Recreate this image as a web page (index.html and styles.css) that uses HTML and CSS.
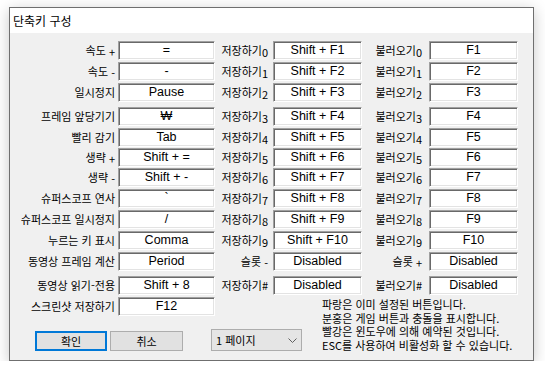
FILE: index.html
```html
<!DOCTYPE html>
<html lang="ko">
<head>
<meta charset="utf-8">
<title>단축키 구성</title>
<link rel="stylesheet" href="styles.css">
</head>
<body>
<div class="win">
  <div class="titlebar">단축키 구성</div>
  <div class="content">
    <div class="grid">
      <div class="lbl l1">속도 <span class="sub">+</span></div><div class="box">=</div>
      <div class="lbl l2">저장하기<span class="sub">0</span></div><div class="box">Shift + F1</div>
      <div class="lbl l3">불러오기<span class="sub">0</span></div><div class="box">F1</div>

      <div class="lbl l1">속도 <span class="sub">-</span></div><div class="box">-</div>
      <div class="lbl l2">저장하기<span class="sub">1</span></div><div class="box">Shift + F2</div>
      <div class="lbl l3">불러오기<span class="sub">1</span></div><div class="box">F2</div>

      <div class="lbl l1">일시정지</div><div class="box">Pause</div>
      <div class="lbl l2">저장하기<span class="sub">2</span></div><div class="box">Shift + F3</div>
      <div class="lbl l3">불러오기<span class="sub">2</span></div><div class="box">F3</div>

      <div class="lbl l1">프레임 앞당기기</div><div class="box">₩</div>
      <div class="lbl l2">저장하기<span class="sub">3</span></div><div class="box">Shift + F4</div>
      <div class="lbl l3">불러오기<span class="sub">3</span></div><div class="box">F4</div>

      <div class="lbl l1">빨리 감기</div><div class="box">Tab</div>
      <div class="lbl l2">저장하기<span class="sub">4</span></div><div class="box">Shift + F5</div>
      <div class="lbl l3">불러오기<span class="sub">4</span></div><div class="box">F5</div>

      <div class="lbl l1">생략 <span class="sub">+</span></div><div class="box">Shift + =</div>
      <div class="lbl l2">저장하기<span class="sub">5</span></div><div class="box">Shift + F6</div>
      <div class="lbl l3">불러오기<span class="sub">5</span></div><div class="box">F6</div>

      <div class="lbl l1">생략 <span class="sub">-</span></div><div class="box">Shift + -</div>
      <div class="lbl l2">저장하기<span class="sub">6</span></div><div class="box">Shift + F7</div>
      <div class="lbl l3">불러오기<span class="sub">6</span></div><div class="box">F7</div>

      <div class="lbl l1">슈퍼스코프 연사</div><div class="box">`</div>
      <div class="lbl l2">저장하기<span class="sub">7</span></div><div class="box">Shift + F8</div>
      <div class="lbl l3">불러오기<span class="sub">7</span></div><div class="box">F8</div>

      <div class="lbl l1">슈퍼스코프 일시정지</div><div class="box">/</div>
      <div class="lbl l2">저장하기<span class="sub">8</span></div><div class="box">Shift + F9</div>
      <div class="lbl l3">불러오기<span class="sub">8</span></div><div class="box">F9</div>

      <div class="lbl l1">누르는 키 표시</div><div class="box">Comma</div>
      <div class="lbl l2">저장하기<span class="sub">9</span></div><div class="box">Shift + F10</div>
      <div class="lbl l3">불러오기<span class="sub">9</span></div><div class="box">F10</div>

      <div class="lbl l1">동영상 프레임 계산</div><div class="box">Period</div>
      <div class="lbl l2">슬롯 <span class="sub">-</span></div><div class="box">Disabled</div>
      <div class="lbl l3">슬롯 <span class="sub">+</span></div><div class="box">Disabled</div>

      <div class="lbl l1">동영상 읽기-전용</div><div class="box">Shift + 8</div>
      <div class="lbl l2">저장하기#</div><div class="box">Disabled</div>
      <div class="lbl l3">불러오기#</div><div class="box">Disabled</div>
    </div>
    <div class="bottom">
      <div class="left">
        <div class="f12row">
          <div class="lbl l1">스크린샷 저장하기</div><div class="box">F12</div>
        </div>
        <div class="buttons">
          <div class="btn btn-default">확인</div>
          <div class="btn">취소</div>
          <div class="dropdown">
            <span>1 페이지</span>
            <svg class="chev" width="9" height="5" viewBox="0 0 9 5"><polyline points="0.5,0.5 4.5,4.5 8.5,0.5" fill="none" stroke="#606060" stroke-width="1"/></svg>
          </div>
        </div>
      </div>
      <div class="note">
        <div>파랑은 이미 설정된 버튼입니다.</div>
        <div>분홍은 게임 버튼과 충돌을 표시합니다.</div>
        <div>빨강은 윈도우에 의해 예약된 것입니다.</div>
        <div>ESC를 사용하여 비활성화 할 수 있습니다.</div>
      </div>
    </div>
  </div>
</div>
</body>
</html>
```
FILE: styles.css
```css
html, body {
  margin: 0;
  padding: 0;
  background: #ffffff;
}
body {
  font-family: "Noto Sans CJK KR", "Noto Sans", sans-serif;
  color: #000;
}
.win {
  box-sizing: border-box;
  margin: 7px 0 0 9px;
  width: 525px;
  height: 354px;
  border: 1px solid #6f6f6f;
  background: #f0f0f0;
  box-shadow: 0 3px 14px rgba(0, 0, 0, 0.22);
}
.titlebar {
  height: 25px;
  background: #ffffff;
  font-size: 12px;
  line-height: 25px;
  padding-left: 3px;
}
.content {
  padding-top: 8px;
}
.grid {
  display: grid;
  grid-template-columns: 108px 97px 58px 89px 67px 89px;
  grid-template-rows: 21px 21px 24px 21px 20px 20px 21px 21px 21px 21px 24px 21px;
}
.lbl {
  height: 19px;
  text-align: right;
  font-size: 11px;
  line-height: 19px;
  white-space: nowrap;
}
.l1 { padding-right: 3px; }
.l2 { padding-right: 5px; }
.l3 { padding-right: 7px; }
.sub {
  font-size: 11px;
  position: relative;
  top: 2px;
}
.box {
  box-sizing: border-box;
  height: 19px;
  background: #ffffff;
  border-top: 1px solid #a0a0a0;
  border-left: 1px solid #a0a0a0;
  border-bottom: 1px solid #ffffff;
  border-right: 1px solid #ffffff;
  box-shadow: inset 1px 1px 0 #696969, inset -1px -1px 0 #e3e3e3;
  text-align: center;
  font-family: "Liberation Sans", "Noto Sans CJK KR", sans-serif;
  font-size: 12.5px;
  line-height: 16px;
  white-space: nowrap;
}
.bottom {
  display: flex;
}
.left {
  width: 312px;
  flex: none;
}
.f12row {
  display: grid;
  grid-template-columns: 108px 97px;
}
.buttons {
  display: flex;
  align-items: flex-start;
  margin-top: 13px;
  padding-left: 25px;
}
.btn {
  box-sizing: border-box;
  width: 73px;
  height: 20px;
  margin-top: 2px;
  margin-right: 3px;
  background: #e1e1e1;
  border: 1px solid #adadad;
  font-size: 11px;
  line-height: 18px;
  text-align: center;
}
.btn-default {
  width: 72px;
  border: 2px solid #0078d7;
  line-height: 16px;
}
.dropdown {
  box-sizing: border-box;
  width: 91px;
  height: 22px;
  margin-left: 25px;
  background: #e5e5e5;
  border: 1px solid #adadad;
  display: flex;
  align-items: center;
  justify-content: space-between;
  padding: 0 4px 0 4px;
  font-size: 11px;
}
.chev {
  display: block;
  margin-top: 1px;
}
.note {
  font-size: 11px;
  line-height: 13.5px;
  padding-top: 1px;
  white-space: nowrap;
}
```
